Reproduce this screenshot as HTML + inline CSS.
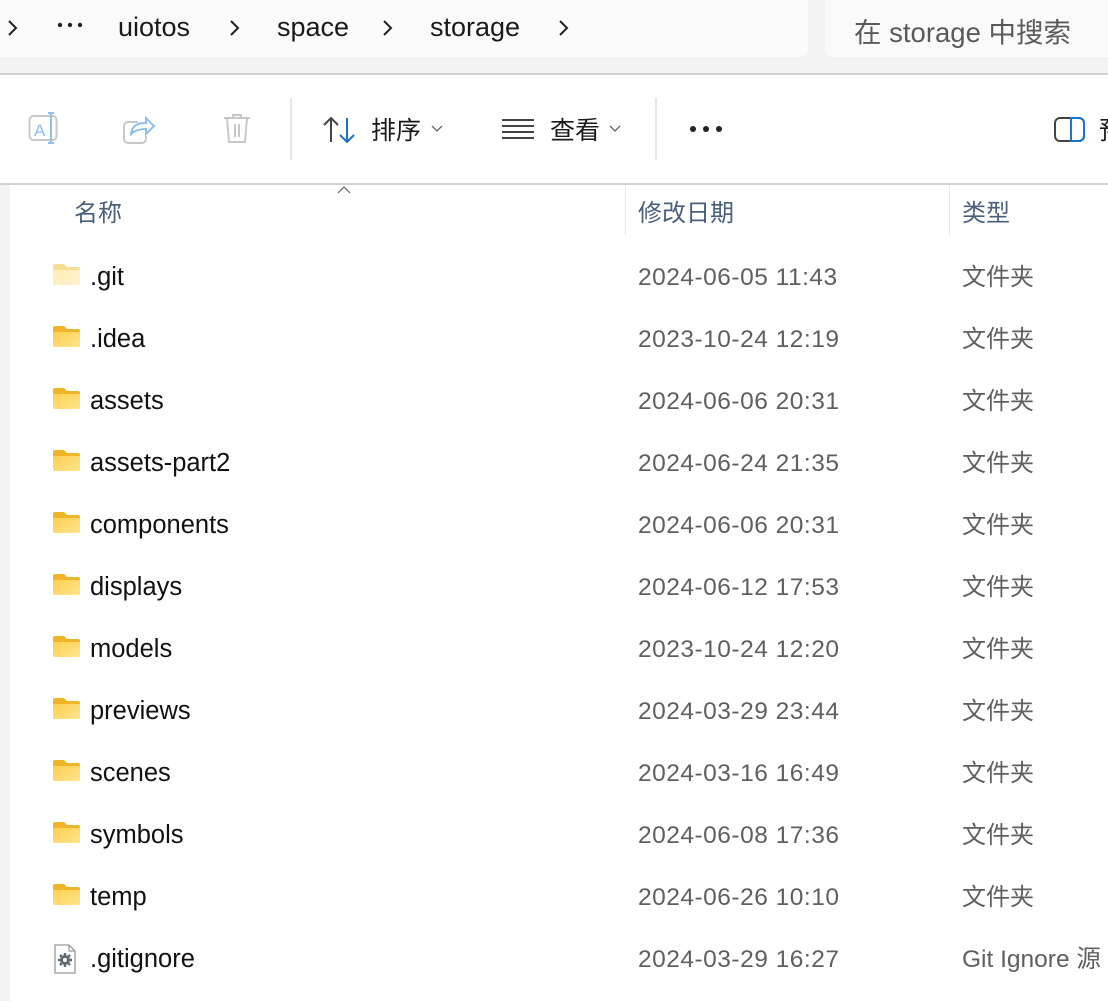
<!DOCTYPE html>
<html><head><meta charset="utf-8"><style>
*{margin:0;padding:0;box-sizing:border-box}
html,body{width:1108px;height:1001px;overflow:hidden;background:#fff;font-family:"Liberation Sans","Noto Sans CJK SC",sans-serif}
.top{position:absolute;left:0;top:0;width:1108px;height:73px;background:#f3f3f3}
.bc{position:absolute;left:-10px;top:0;width:818px;height:57px;background:#fafafa;border-radius:0 0 8px 8px}
.sr{position:absolute;left:825px;top:0;width:300px;height:57px;background:#fafafa;border-radius:0 0 8px 8px}
.t{position:absolute;white-space:nowrap}
.l1{position:absolute;left:0;top:73px;width:1108px;height:2px;background:#d2d2d2}
.l2{position:absolute;left:0;top:183px;width:1108px;height:2px;background:#d2d2d2}
.strip{position:absolute;left:0;top:185px;width:10px;height:816px;background:#f3f3f3}
.vs{position:absolute;top:98px;width:2px;height:62px;background:#e6e6e6}
.hd{color:#4a5f7c;font-size:24px;line-height:28px}
.nm{color:#111;font-size:25.5px;left:90px;margin-top:2px}
.dt{color:#5f5f5f;font-size:24.5px;left:638px;letter-spacing:0.5px;margin-top:2px}
.ty{color:#5f5f5f;font-size:24px;left:962px;line-height:28px;margin-top:3px}
.fold{position:absolute;left:52px;width:28px;height:22px}
.cs{position:absolute;top:185px;width:1px;height:50px;background:#e5e5e5}
</style></head><body>
<div class="top"></div>
<div class="bc"></div><div class="sr"></div>
<svg class="t" style="left:6px;top:18px" width="14" height="20"><path d="M3 3l7 7-7 7" stroke="#222" stroke-width="2" fill="none"/></svg>
<svg class="t" style="left:56px;top:20px" width="30" height="10"><circle cx="4" cy="5" r="2.2" fill="#222"/><circle cx="14" cy="5" r="2.2" fill="#222"/><circle cx="24" cy="5" r="2.2" fill="#222"/></svg>
<div class="t" style="left:118px;top:12px;font-size:27px;color:#1a1a1a">uiotos</div>
<svg class="t" style="left:228px;top:18px" width="14" height="20"><path d="M3 3l7 7-7 7" stroke="#222" stroke-width="2" fill="none"/></svg>
<div class="t" style="left:277px;top:12px;font-size:27px;color:#1a1a1a">space</div>
<svg class="t" style="left:381px;top:18px" width="14" height="20"><path d="M3 3l7 7-7 7" stroke="#222" stroke-width="2" fill="none"/></svg>
<div class="t" style="left:430px;top:12px;font-size:27px;color:#1a1a1a">storage</div>
<svg class="t" style="left:557px;top:18px" width="14" height="20"><path d="M3 3l7 7-7 7" stroke="#222" stroke-width="2" fill="none"/></svg>
<div class="t" style="left:854px;top:10px;font-size:27.5px;color:#5a5a5a">在 storage 中搜索</div>
<div class="l1"></div>
<!-- toolbar -->
<svg class="t" style="left:28px;top:112px" width="36" height="36"><rect x="1.5" y="4" width="27" height="24" rx="4" fill="none" stroke="#c8c8c8" stroke-width="2"/><text x="6" y="24" font-size="17" fill="#8fc0ec" font-family="Liberation Sans">A</text><path d="M20 1h6M23 1v30M20 31h6" stroke="#8fc0ec" stroke-width="2"/></svg>
<svg class="t" style="left:118px;top:112px" width="40" height="36"><path d="M20 10h-10a4 4 0 0 0-4 4v13a4 4 0 0 0 4 4h14a4 4 0 0 0 4-4v-3" fill="none" stroke="#c8c8c8" stroke-width="2"/><path d="M13 22c1-8 6-11 15-11v-5l8 8-8 8v-5c-6 0-11 1-15 5z" fill="none" stroke="#8fc0ec" stroke-width="2"/></svg>
<svg class="t" style="left:220px;top:112px" width="36" height="36"><path d="M4 6h26M13 6V3h8v3M7 6l2 24h16l2-24M15 12v13M19 12v13" fill="none" stroke="#c8c8c8" stroke-width="2"/></svg>
<div class="vs" style="left:290px"></div>
<svg class="t" style="left:322px;top:114px" width="36" height="32"><path d="M9 28V4M2 11l7-7 7 7" stroke="#444" stroke-width="2" fill="none"/><path d="M25 4v24M18 21l7 7 7-7" stroke="#1a73d1" stroke-width="2" fill="none"/></svg>
<div class="t" style="left:371px;top:116px;font-size:25px;line-height:30px;color:#1a1a1a">排序</div>
<svg class="t" style="left:430px;top:124px" width="14" height="10"><path d="M2 2l5 5 5-5" stroke="#666" stroke-width="1.3" fill="none"/></svg>
<svg class="t" style="left:500px;top:116px" width="36" height="26"><path d="M2 4h32M2 10h32M2 16h32M2 22h32" stroke="#444" stroke-width="2"/></svg>
<div class="t" style="left:550px;top:116px;font-size:25px;line-height:30px;color:#1a1a1a">查看</div>
<svg class="t" style="left:608px;top:124px" width="14" height="10"><path d="M2 2l5 5 5-5" stroke="#666" stroke-width="1.3" fill="none"/></svg>
<div class="vs" style="left:655px"></div>
<svg class="t" style="left:688px;top:122px" width="36" height="14"><circle cx="5" cy="7" r="3" fill="#222"/><circle cx="18" cy="7" r="3" fill="#222"/><circle cx="31" cy="7" r="3" fill="#222"/></svg>
<svg class="t" style="left:1053px;top:116px" width="36" height="28"><rect x="2" y="2" width="29" height="23" rx="5" fill="none" stroke="#444" stroke-width="2"/><path d="M18 2h8a5 5 0 0 1 5 5v13a5 5 0 0 1-5 5h-8z" fill="none" stroke="#1a73d1" stroke-width="2"/></svg>
<div class="t" style="left:1099px;top:116px;font-size:25px;line-height:30px;color:#1a1a1a">预</div>
<div class="l2"></div>
<div class="strip"></div>
<svg class="t" style="left:336px;top:185px" width="16" height="10"><path d="M2 8l6-6 6 6" stroke="#666" stroke-width="1.2" fill="none"/></svg>
<div class="t hd" style="left:74px;top:200px">名称</div>
<div class="cs" style="left:625px"></div>
<div class="t hd" style="left:638px;top:200px">修改日期</div>
<div class="cs" style="left:949px"></div>
<div class="t hd" style="left:962px;top:200px">类型</div>

<svg width="0" height="0" style="position:absolute"><defs><linearGradient id="g" x1="0" y1="0" x2="1" y2="1"><stop offset="0" stop-color="#fcd04f"/><stop offset="1" stop-color="#ffe48f"/></linearGradient><linearGradient id="g2" x1="0" y1="0" x2="1" y2="1"><stop offset="0" stop-color="#fdecb5"/><stop offset="1" stop-color="#fff3cf"/></linearGradient></defs></svg>

<svg class="fold" style="top:263px"><path d="M1 3a2 2 0 0 1 2-2h9l3 3h11a2 2 0 0 1 2 2v14a2 2 0 0 1-2 2H3a2 2 0 0 1-2-2z" fill="#f7dc95"/><path d="M1 7h27v13a2 2 0 0 1-2 2H3a2 2 0 0 1-2-2z" fill="url(#g2)"/></svg>
<div class="t nm" style="top:261px">.git</div><div class="t dt" style="top:262px">2024-06-05 11:43</div><div class="t ty" style="top:261px">文件夹</div>

<svg class="fold" style="top:325px"><path d="M1 3a2 2 0 0 1 2-2h9l3 3h11a2 2 0 0 1 2 2v14a2 2 0 0 1-2 2H3a2 2 0 0 1-2-2z" fill="#f0b429"/><path d="M1 7h27v13a2 2 0 0 1-2 2H3a2 2 0 0 1-2-2z" fill="url(#g)"/></svg>
<div class="t nm" style="top:323px">.idea</div><div class="t dt" style="top:324px">2023-10-24 12:19</div><div class="t ty" style="top:323px">文件夹</div>

<svg class="fold" style="top:387px"><path d="M1 3a2 2 0 0 1 2-2h9l3 3h11a2 2 0 0 1 2 2v14a2 2 0 0 1-2 2H3a2 2 0 0 1-2-2z" fill="#f0b429"/><path d="M1 7h27v13a2 2 0 0 1-2 2H3a2 2 0 0 1-2-2z" fill="url(#g)"/></svg>
<div class="t nm" style="top:385px">assets</div><div class="t dt" style="top:386px">2024-06-06 20:31</div><div class="t ty" style="top:385px">文件夹</div>

<svg class="fold" style="top:449px"><path d="M1 3a2 2 0 0 1 2-2h9l3 3h11a2 2 0 0 1 2 2v14a2 2 0 0 1-2 2H3a2 2 0 0 1-2-2z" fill="#f0b429"/><path d="M1 7h27v13a2 2 0 0 1-2 2H3a2 2 0 0 1-2-2z" fill="url(#g)"/></svg>
<div class="t nm" style="top:447px">assets-part2</div><div class="t dt" style="top:448px">2024-06-24 21:35</div><div class="t ty" style="top:447px">文件夹</div>

<svg class="fold" style="top:511px"><path d="M1 3a2 2 0 0 1 2-2h9l3 3h11a2 2 0 0 1 2 2v14a2 2 0 0 1-2 2H3a2 2 0 0 1-2-2z" fill="#f0b429"/><path d="M1 7h27v13a2 2 0 0 1-2 2H3a2 2 0 0 1-2-2z" fill="url(#g)"/></svg>
<div class="t nm" style="top:509px">components</div><div class="t dt" style="top:510px">2024-06-06 20:31</div><div class="t ty" style="top:509px">文件夹</div>

<svg class="fold" style="top:573px"><path d="M1 3a2 2 0 0 1 2-2h9l3 3h11a2 2 0 0 1 2 2v14a2 2 0 0 1-2 2H3a2 2 0 0 1-2-2z" fill="#f0b429"/><path d="M1 7h27v13a2 2 0 0 1-2 2H3a2 2 0 0 1-2-2z" fill="url(#g)"/></svg>
<div class="t nm" style="top:571px">displays</div><div class="t dt" style="top:572px">2024-06-12 17:53</div><div class="t ty" style="top:571px">文件夹</div>

<svg class="fold" style="top:635px"><path d="M1 3a2 2 0 0 1 2-2h9l3 3h11a2 2 0 0 1 2 2v14a2 2 0 0 1-2 2H3a2 2 0 0 1-2-2z" fill="#f0b429"/><path d="M1 7h27v13a2 2 0 0 1-2 2H3a2 2 0 0 1-2-2z" fill="url(#g)"/></svg>
<div class="t nm" style="top:633px">models</div><div class="t dt" style="top:634px">2023-10-24 12:20</div><div class="t ty" style="top:633px">文件夹</div>

<svg class="fold" style="top:697px"><path d="M1 3a2 2 0 0 1 2-2h9l3 3h11a2 2 0 0 1 2 2v14a2 2 0 0 1-2 2H3a2 2 0 0 1-2-2z" fill="#f0b429"/><path d="M1 7h27v13a2 2 0 0 1-2 2H3a2 2 0 0 1-2-2z" fill="url(#g)"/></svg>
<div class="t nm" style="top:695px">previews</div><div class="t dt" style="top:696px">2024-03-29 23:44</div><div class="t ty" style="top:695px">文件夹</div>

<svg class="fold" style="top:759px"><path d="M1 3a2 2 0 0 1 2-2h9l3 3h11a2 2 0 0 1 2 2v14a2 2 0 0 1-2 2H3a2 2 0 0 1-2-2z" fill="#f0b429"/><path d="M1 7h27v13a2 2 0 0 1-2 2H3a2 2 0 0 1-2-2z" fill="url(#g)"/></svg>
<div class="t nm" style="top:757px">scenes</div><div class="t dt" style="top:758px">2024-03-16 16:49</div><div class="t ty" style="top:757px">文件夹</div>

<svg class="fold" style="top:821px"><path d="M1 3a2 2 0 0 1 2-2h9l3 3h11a2 2 0 0 1 2 2v14a2 2 0 0 1-2 2H3a2 2 0 0 1-2-2z" fill="#f0b429"/><path d="M1 7h27v13a2 2 0 0 1-2 2H3a2 2 0 0 1-2-2z" fill="url(#g)"/></svg>
<div class="t nm" style="top:819px">symbols</div><div class="t dt" style="top:820px">2024-06-08 17:36</div><div class="t ty" style="top:819px">文件夹</div>

<svg class="fold" style="top:883px"><path d="M1 3a2 2 0 0 1 2-2h9l3 3h11a2 2 0 0 1 2 2v14a2 2 0 0 1-2 2H3a2 2 0 0 1-2-2z" fill="#f0b429"/><path d="M1 7h27v13a2 2 0 0 1-2 2H3a2 2 0 0 1-2-2z" fill="url(#g)"/></svg>
<div class="t nm" style="top:881px">temp</div><div class="t dt" style="top:882px">2024-06-26 10:10</div><div class="t ty" style="top:881px">文件夹</div>

<svg class="t" style="left:54px;top:944px" width="24" height="30"><path d="M1 1h14l6 6v22H1z" fill="#fff" stroke="#9a9a9a" stroke-width="1.3"/><path d="M15 1v6h6" fill="none" stroke="#9a9a9a" stroke-width="1.3"/><circle cx="11" cy="16" r="5" fill="#5f6b72"/><path d="M11 9v14M4 16h14M6 11l10 10M16 11l-10 10" stroke="#5f6b72" stroke-width="2.4"/><circle cx="11" cy="16" r="2" fill="#fff"/></svg>
<div class="t nm" style="top:943px">.gitignore</div><div class="t dt" style="top:944px">2024-03-29 16:27</div><div class="t ty" style="top:943px;font-size:24.5px">Git Ignore 源</div>
</body></html>
